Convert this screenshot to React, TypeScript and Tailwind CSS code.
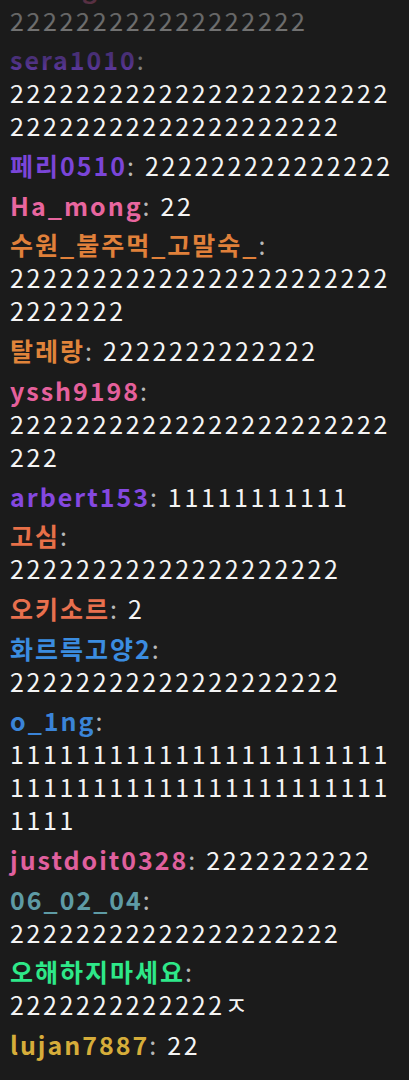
const two = (n: number) => '2'.repeat(n)
const one = (n: number) => '1'.repeat(n)

type Msg = { name: string; color: string; text: string }

const messages: Msg[] = [
  { name: '감자튀김소스', color: 'text-[#3b8de0]', text: two(23) },
  { name: 'bbong22', color: 'text-[#e0609e]', text: two(18) },
  { name: 'sera1010', color: 'text-[#7a45d8]', text: two(43) },
  { name: '페리0510', color: 'text-[#7a45d8]', text: two(15) },
  { name: 'Ha_mong', color: 'text-[#e8669f]', text: '22' },
  { name: '수원_불주먹_고말숙_', color: 'text-[#e0803a]', text: two(30) },
  { name: '탈레랑', color: 'text-[#e0843a]', text: two(13) },
  { name: 'yssh9198', color: 'text-[#e5609c]', text: two(26) },
  { name: 'arbert153', color: 'text-[#8548e0]', text: one(11) },
  { name: '고심', color: 'text-[#e87048]', text: two(20) },
  { name: '오키소르', color: 'text-[#e8704e]', text: '2' },
  { name: '화르륵고양2', color: 'text-[#3b8de0]', text: two(20) },
  { name: 'o_1ng', color: 'text-[#3a84d8]', text: one(50) },
  { name: 'justdoit0328', color: 'text-[#e0609e]', text: two(10) },
  { name: '06_02_04', color: 'text-[#5e9ba5]', text: two(20) },
  { name: '오해하지마세요', color: 'text-[#2ee889]', text: two(13) + 'ㅈ' },
  { name: 'lujan7887', color: 'text-[#d6ad3a]', text: '22' },
]

function ChatLine({ msg }: { msg: Msg }) {
  return (
    <p className="break-words leading-[33px]">
      <span className={`whitespace-nowrap break-keep font-semibold tracking-[2px] ${msg.color}`}>{msg.name}</span>
      <span className="text-[#b8b8b8]">:</span>{' '}
      <span className="break-keep text-[#f4f4f4]">{msg.text}</span>
    </p>
  )
}

export default function App() {
  return (
    <div className="relative h-[1080px] w-[409px] overflow-hidden bg-[#1b1b1b] font-['Noto_Sans_CJK_KR','Noto_Sans',sans-serif] text-[25px] tracking-[2.65px]">
      <div className="flex h-full flex-col justify-end gap-[6.7px] pb-[19px] pl-[10px] pr-[8px]">
        {messages.map((m, i) => (
          <ChatLine key={i} msg={m} />
        ))}
      </div>
      <div className="pointer-events-none absolute inset-x-0 top-0 h-[88px] bg-[linear-gradient(to_bottom,rgba(27,27,27,0.7)_0px,rgba(27,27,27,0.5)_60px,rgba(27,27,27,0)_88px)]" />
    </div>
  )
}
